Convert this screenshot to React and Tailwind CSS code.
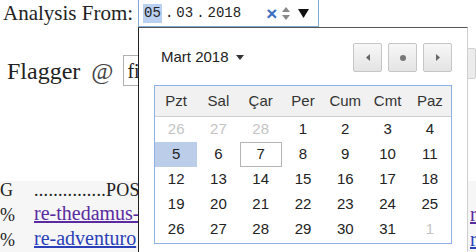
import React from 'react';

const WEEKDAYS = ['Pzt', 'Sal', 'Çar', 'Per', 'Cum', 'Cmt', 'Paz'];

const WEEKS = [
  [[26, 'out'], [27, 'out'], [28, 'out'], [1], [2], [3], [4]],
  [[5, 'selected'], [6], [7, 'today'], [8], [9], [10], [11]],
  [[12], [13], [14], [15], [16], [17], [18]],
  [[19], [20], [21], [22], [23], [24], [25]],
  [[26], [27], [28], [29], [30], [31], [1, 'out']],
];

// only the parts of the rows that peek out around the popup
const ROWS = [
  { mark: 'G', left: '...............POS', right: '' },
  { mark: '%', left: 're-thedamus-', right: 'r', link: 'text-[#5a2ba0]' },
  { mark: '%', left: 're-adventuro', right: 'r', link: 'text-[#2a3fb8]' },
];

function dayClass(kind) {
  if (kind === 'out') return 'text-[#c4c4c4]';
  if (kind === 'selected') return 'bg-[#bccde9] text-[#222]';
  if (kind === 'today') return 'border border-[#b5b5b5] text-[#222]';
  return 'text-[#222]';
}

function NavButton({ children }) {
  return (
    <button
      type="button"
      className="flex h-[29px] w-[29px] items-center justify-center rounded-[2px] border border-[#c6c6c6] bg-gradient-to-b from-[#f7f7f7] to-[#e4e4e4]"
    >
      {children}
    </button>
  );
}

function DatePopup() {
  return (
    <div className="absolute left-[138px] top-[27px] z-10 h-[240px] w-[330px] border-l border-t border-r border-l-[#222] border-t-[#555] border-r-[#cfcfcf] bg-white px-[15px] pt-[15px] font-['Liberation_Sans',Arial,sans-serif]">
      <div className="flex h-[29px] items-center justify-between">
        <div className="flex items-center pl-[7px] text-[15px] text-[#222]">
          Mart 2018
          <svg width="8" height="5" viewBox="0 0 8 5" className="ml-[7px]">
            <path d="M0 0h8L4 5z" fill="#333" />
          </svg>
        </div>
        <div className="flex gap-[6px]">
          <NavButton>
            <svg width="4" height="7" viewBox="0 0 4 7">
              <path d="M4 0v7L0 3.5z" fill="#666" />
            </svg>
          </NavButton>
          <NavButton>
            <span className="h-[6px] w-[6px] rounded-full bg-[#777]" />
          </NavButton>
          <NavButton>
            <svg width="4" height="7" viewBox="0 0 4 7">
              <path d="M0 0v7l4-3.5z" fill="#666" />
            </svg>
          </NavButton>
        </div>
      </div>

      <div className="mt-[13px] border border-[#8fb1e8] bg-white pb-[1px]">
        <div className="grid h-[31px] grid-cols-7 items-center border-b border-[#cfcfcf] bg-[#f1f1f1] text-[15px] text-[#333]">
          {WEEKDAYS.map((d) => (
            <div key={d} className="text-center">
              {d}
            </div>
          ))}
        </div>
        {WEEKS.map((week, i) => (
          <div key={i} className="grid grid-cols-7 text-[15px]">
            {week.map(([n, kind], j) => (
              <div
                key={j}
                className={`flex h-[25px] items-center justify-center ${dayClass(kind)}`}
              >
                {n}
              </div>
            ))}
          </div>
        ))}
      </div>
    </div>
  );
}

export default function App() {
  return (
    <div className="relative h-[252px] w-[476px] overflow-hidden bg-white font-['Liberation_Serif','Times_New_Roman',serif] text-[#222]">
      {/* date row */}
      <div className="flex h-[27px] items-end">
        <span className="mb-[3px] pl-[3px] text-[21px] leading-none">Analysis From:</span>
        <div className="ml-[5px] flex h-[28px] w-[181px] items-center border border-[#80a6da] pl-[4px] font-['Liberation_Mono',monospace] text-[14px]">
          <span className="bg-[#b9d0f0] px-[1px] leading-[19px]">05</span>
          <span className="mx-[3px]">.</span>
          <span>03</span>
          <span className="mx-[3px]">.</span>
          <span>2018</span>
          <span className="ml-[25px] font-['Liberation_Sans',sans-serif] text-[19px] font-bold leading-none text-[#3a6fc0]">×</span>
          <span className="ml-[5px] flex flex-col items-center gap-[3px]">
            <svg width="8" height="5" viewBox="0 0 8 5">
              <path d="M0 5h8L4 0z" fill="#888" />
            </svg>
            <svg width="8" height="5" viewBox="0 0 8 5">
              <path d="M0 0h8L4 5z" fill="#888" />
            </svg>
          </span>
          <svg width="11" height="9" viewBox="0 0 11 9" className="ml-[8px]">
            <path d="M0 0h11L5.5 9z" fill="#111" />
          </svg>
        </div>
      </div>

      {/* flagger row */}
      <div className="mt-[28px] flex h-[31px] items-center">
        <span className="pl-[7px] text-[24px]">Flagger</span>
        <span className="ml-[11px] text-[24px] text-[#444]">@</span>
        <div className="ml-[10px] flex h-[31px] w-[340px] items-center border border-[#b0b0b0] pl-[3px] text-[20px]">
          fi
        </div>
        <div className="-mt-[14px] ml-[5px] h-[31px] w-[30px] shrink-0 rounded-[2px] border border-[#d0d0d0] bg-[#ececec]" />
      </div>

      {/* results table behind the popup */}
      <div className="mt-[95px] bg-[#f6f6f6] text-[18px]">
        {ROWS.map((row, i) => (
          <div key={i} className={`flex items-end pb-[3px] ${i === 0 ? 'h-[26px]' : 'h-[25px]'}`}>
            <div className="flex w-[138px] shrink-0 overflow-hidden whitespace-nowrap">
              <span className="w-[34px] shrink-0">{row.mark}</span>
              {row.link ? (
                <a href="#" className={`${row.link} text-[20px] leading-[22px] underline`}>
                  {row.left}
                </a>
              ) : (
                <span className="tracking-[0.3px]">{row.left}</span>
              )}
            </div>
            <div className="ml-[332px] whitespace-nowrap">
              {row.right && (
                <a href="#" className={`${row.link} text-[20px] leading-[22px] underline`}>
                  {row.right}
                </a>
              )}
            </div>
          </div>
        ))}
      </div>

      <DatePopup />
    </div>
  );
}
